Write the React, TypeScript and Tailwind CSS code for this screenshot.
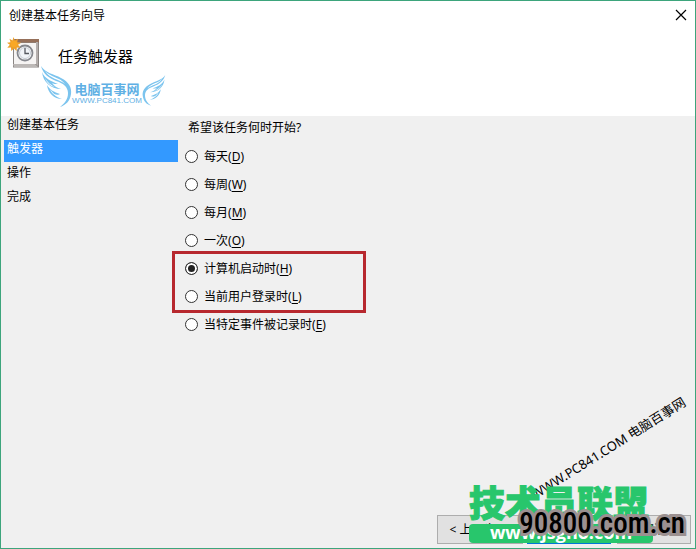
import { useState } from 'react';

const STEPS = ['创建基本任务', '触发器', '操作', '完成'];
const ACTIVE_STEP = 1;

interface Trigger {
  id: string;
  label: string;
  hotkey: string;
}

const TRIGGERS: Trigger[] = [
  { id: 'daily', label: '每天', hotkey: 'D' },
  { id: 'weekly', label: '每周', hotkey: 'W' },
  { id: 'monthly', label: '每月', hotkey: 'M' },
  { id: 'once', label: '一次', hotkey: 'O' },
];
const MARKED_TRIGGERS: Trigger[] = [
  { id: 'startup', label: '计算机启动时', hotkey: 'H' },
  { id: 'logon', label: '当前用户登录时', hotkey: 'L' },
];
const EVENT_TRIGGER: Trigger = { id: 'event', label: '当特定事件被记录时', hotkey: 'E' };

function TaskIcon() {
  return (
    <svg viewBox="0 0 32 32" className="h-8 w-8 shrink-0" aria-hidden="true">
      <path d="M6 30.500V5h26v25.500z" fill="#8a8583" />
      <path d="M6 27h22l3 3H7z" fill="#bcb8b6" />
      <path d="M7 6h22v21H7z" fill="#f6f4f3" />
      <path d="M7 2h25v3.500H7z" fill="#96705a" />
      <path d="M29 5h2v24l-2-2z" fill="#b5afad" />
      <circle cx="18" cy="16" r="7.500" fill="#fff" stroke="#85878d" strokeWidth="1.800" />
      <circle cx="18" cy="16" r="5.500" fill="#f1f4f8" stroke="#c5cbd4" />
      <path d="M18 11v5.500h4" fill="none" stroke="#55585f" strokeWidth="1.300" />
      <path
        d="m6.500 0 1.300 3.400L11 1.800l-.8 3.400 4 .6-3.200 2 2.500 2.900-3.700-.3-.2 3.600-2.600-2.600-2.800 2.600-.2-3.600-3.700.3 2.500-2.900L0 5.800l3.500-.6L2.500 1.800l3 1.600z"
        fill="#eda02a"
      />
      <circle cx="7" cy="7" r="3.200" fill="#f9a825" />
    </svg>
  );
}

function Wing({ className }: { className: string }) {
  return (
    <svg viewBox="0 0 32 42" className={className} fill="#7cc4ee" aria-hidden="true">
      <path d="M1 1c4 7 13 8 20 12 8 4 11 10 10 16-1 7-5 11-11 13 5-4 8-8 8-14 0-6-5-10-12-12C9 13 3 9 1 1z" />
      <path d="M2 7c3 7 9 9 16 12-2 0-5 0-6-1 2 3 5 5 9 6C11 24 3 17 2 7z" />
      <path d="M7 20c3 5 7 7 13 9-1 1-4 1-6 0 2 3 5 4 8 5-8 0-14-6-15-14z" />
      <path d="M5 6c5 6 15 6 20 13C19 14 10 14 5 6z" fill="#fff" />
      <path d="M5 13c3 5 6 7 10 9-5-1-8-4-10-9zM10 24c2 3 4 5 7 7-4-1-6-4-7-7z" fill="#fff" />
    </svg>
  );
}

function TriggerOption({
  trigger,
  selected,
  onSelect,
}: {
  trigger: Trigger;
  selected: string;
  onSelect: (id: string) => void;
}) {
  return (
    <label className="flex h-7 items-center gap-1.5">
      <input
        type="radio"
        name="trigger"
        value={trigger.id}
        checked={selected === trigger.id}
        onChange={() => onSelect(trigger.id)}
        className="h-[13px] w-[13px] shrink-0 appearance-none rounded-full border border-[#333] bg-white checked:bg-[#222] checked:shadow-[inset_0_0_0_2px_#fff]"
      />
      <span className="pt-0.5">
        {trigger.label}(<u className="underline-offset-2">{trigger.hotkey}</u>)
      </span>
    </label>
  );
}

export default function App() {
  const [selected, setSelected] = useState('startup');

  return (
    <div className="relative flex min-h-screen flex-col overflow-hidden border border-[#3da57c] bg-[#f0f0f0] font-['Noto_Sans','Noto_Sans_CJK_SC',sans-serif] text-xs leading-[18px] text-black">
      {/* Title bar and heading */}
      <header className="relative h-[115px] bg-white">
        <div className="flex h-7 items-center justify-between pr-1 pl-2">
          <h1 className="pt-0.5">创建基本任务向导</h1>
          <button type="button" aria-label="关闭" className="p-1">
            <svg viewBox="0 0 12 12" className="h-3 w-3" stroke="#000" strokeWidth="1.200" aria-hidden="true">
              <path d="m1 1 10 10M11 1 1 11" />
            </svg>
          </button>
        </div>
        <div className="flex items-center gap-[19px] px-1.5 pt-2">
          <TaskIcon />
          <h2 className="pt-1.5 text-[15px] leading-5">任务触发器</h2>
        </div>

        <div className="absolute top-[64px] left-[39px] flex items-end text-[#5fb0e4]">
          <Wing className="h-[42px] w-8" />
          <div className="w-[70px] pb-0.5 text-center">
            <p className="text-[13px] leading-4 font-bold">电脑百事网</p>
            <p className="font-['Liberation_Sans'] text-[8px] leading-2 whitespace-nowrap">WWW.PC841.COM</p>
          </div>
          <Wing className="h-[34px] w-6 -scale-x-100" />
        </div>
      </header>

      <main className="flex flex-1">
        <ol className="ml-[3px] w-[174px] shrink-0">
          {STEPS.map((step, i) => (
            <li
              key={step}
              aria-current={i === ACTIVE_STEP ? 'step' : undefined}
              className={i === ACTIVE_STEP ? 'mb-0.5 h-[22px] bg-[#3399ff] px-[3px] text-white' : 'mb-0.5 h-[22px] px-[3px]'}
            >
              {step}
            </li>
          ))}
        </ol>

        <fieldset className="min-w-0 flex-1 pl-[7px]">
          <legend className="h-[26px] px-[3px] pt-[3px]">希望该任务何时开始?</legend>
          {TRIGGERS.map((t) => (
            <TriggerOption key={t.id} trigger={t} selected={selected} onSelect={setSelected} />
          ))}
          <div className="-ml-2.5 w-[188px] pl-2.5 outline-3 outline-[#b7282e]">
            {MARKED_TRIGGERS.map((t) => (
              <TriggerOption key={t.id} trigger={t} selected={selected} onSelect={setSelected} />
            ))}
          </div>
          <TriggerOption trigger={EVENT_TRIGGER} selected={selected} onSelect={setSelected} />
        </fieldset>
      </main>

      <footer className="flex justify-end px-1 pb-1">
        <button type="button" className="h-[29px] w-[86px] border border-[#adadad] bg-[#e1e1e1] whitespace-nowrap">
          &lt; 上一步(<u>B</u>)
        </button>
        <button type="button" className="ml-1 h-[29px] w-[84px] border-2 border-[#0078d7] bg-[#e1e1e1] whitespace-nowrap">
          下一步(<u>N</u>) &gt;
        </button>
        <button type="button" className="ml-1.5 h-[29px] w-[74px] border border-[#adadad] bg-[#e1e1e1]">
          取消
        </button>
      </footer>

      {/* Site marks laid over the window */}
      <p className="absolute right-[-3px] bottom-[92px] -rotate-32 text-[13px] leading-4 whitespace-nowrap">
        WWW.PC841.COM 电脑百事网
      </p>
      <div className="absolute right-[42px] bottom-[5px] w-[184px]">
        <p className="text-[36px] leading-10 font-black whitespace-nowrap text-[#28c66c] [-webkit-text-stroke:1px_#28c66c]">
          技术员联盟
        </p>
        <p className="h-[19px] rounded bg-[#28c66c] text-center font-['Open_Sans'] text-[18px] leading-4 font-bold text-white">
          www.jsgho.com
        </p>
      </div>
      <p className="absolute right-2.5 bottom-[7px] font-['Roboto_Condensed','Liberation_Sans_Narrow',sans-serif] text-[29px] leading-9 font-medium whitespace-nowrap [paint-order:stroke] [-webkit-text-stroke:6px_#9b9090]">
        90800.com.cn
      </p>
    </div>
  );
}
